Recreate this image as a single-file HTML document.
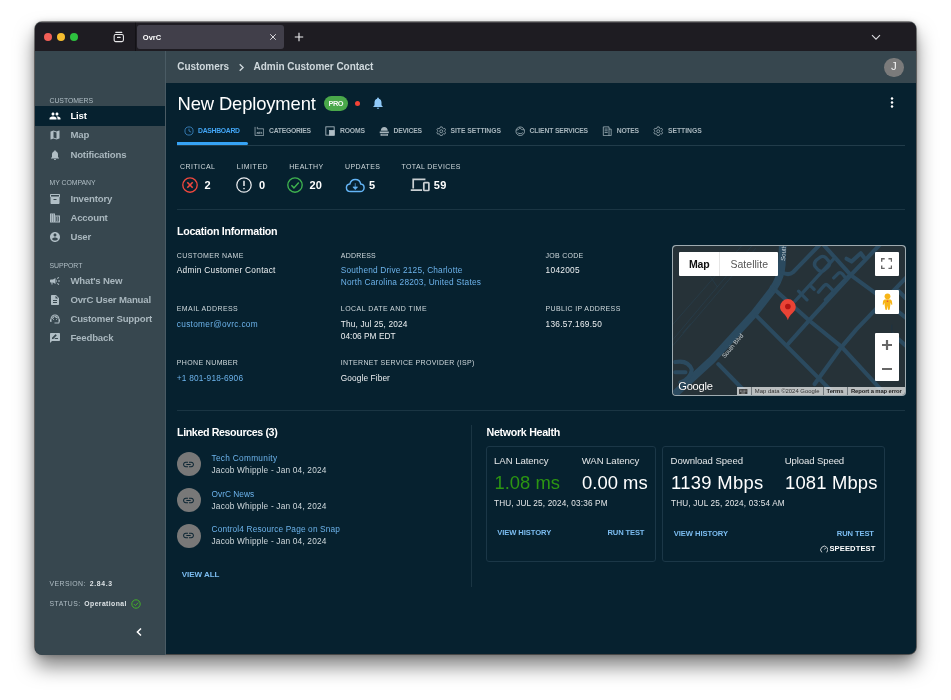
<!DOCTYPE html>
<html lang="en">
<head>
<meta charset="utf-8">
<title>OvrC</title>
<style>
*{box-sizing:border-box;margin:0;padding:0}
html,body{width:951px;height:700px;overflow:hidden;background:#fff}
body{font-family:"Liberation Sans",Arial,sans-serif;position:relative;color:#fff}
#win{position:absolute;left:35px;top:21.5px;width:881.3px;height:632.6px;border-radius:7px;background:#06212f;
 box-shadow:0 0 0 .8px rgba(0,0,0,.55),0 12px 20px rgba(0,0,0,.5),0 1px 6px rgba(0,0,0,.25);}
#clip{will-change:transform;position:absolute;left:0;top:0;width:881.3px;height:632.6px;border-radius:7px;overflow:hidden}
.abs{position:absolute}
/* t: text positioned by its vertical centre */
.t{position:absolute;white-space:nowrap;line-height:1;transform:translateY(-50%)}
#titlebar{left:0;top:0;width:882px;height:28.7px;background:#1e1c22}
#tab{left:102px;top:2.8px;width:147px;height:24.3px;background:#413f4a;border-radius:3px}
.tl{position:absolute;width:8.3px;height:8.3px;border-radius:50%;top:10.7px}
#sidebar{left:0;top:28.7px;width:130px;height:604px;background:#37474f}
#appbar{left:130px;top:28.7px;width:752px;height:32.8px;background:#37474f}
#sel{left:0;top:84.4px;width:130px;height:19.2px;background:#06212f}
.sh{font-size:6.9px;color:#b0bec5;letter-spacing:-.05px;left:14.5px}
.si{font-size:9.6px;font-weight:bold;color:#a9b7be;left:35.4px;letter-spacing:-.16px}
.sic{position:absolute;left:13.7px;width:12px;height:12px;transform:translateY(-50%)}
</style>
</head>
<body>
<div id="win">
<div id="clip">
<!-- TITLE BAR -->
<div id="titlebar" class="abs">
  <div class="tl" style="left:8.6px;background:#f25f57"></div>
  <div class="tl" style="left:21.9px;background:#f6bd2f"></div>
  <div class="tl" style="left:35.1px;background:#2ec13f"></div>
  <svg class="abs" style="left:78.2px;top:9px" width="11.6" height="11.6" viewBox="0 0 12 12" fill="none" stroke="#e8e8ea" stroke-width="1.1"><rect x="1.2" y="3.6" width="9.6" height="7.4" rx="1.6"/><path d="M2.8 1.4h6.4M4.6 6.6h2.8" stroke-linecap="round"/></svg>
  <div class="abs" style="left:100px;top:0;width:1px;height:28.7px;background:#131216"></div>
  <div class="abs" style="left:0;top:0;width:882px;height:.8px;background:rgba(255,255,255,.16)"></div>
  <div id="tab" class="abs"></div>
  <div class="t" style="left:107.8px;top:16px;font-size:7.5px;font-weight:bold;color:#fff">OvrC</div>
  <svg class="abs" style="left:234.4px;top:11.3px" width="8" height="8" viewBox="0 0 8 8" stroke="#d6d6da" stroke-width="1" fill="none"><path d="M1.2 1.2l5.6 5.6M6.8 1.2L1.2 6.8"/></svg>
  <svg class="abs" style="left:258.6px;top:10px" width="10" height="10" viewBox="0 0 10 10" stroke="#f0f0f2" stroke-width="1.1" fill="none"><path d="M5 .8v8.4M.8 5h8.4"/></svg>
  <svg class="abs" style="left:835.8px;top:12px" width="10" height="7" viewBox="0 0 10 7" stroke="#dcdce0" stroke-width="1.1" fill="none"><path d="M1 1.2l4 4 4-4"/></svg>
</div>
<!-- SIDEBAR -->
<div id="sidebar" class="abs"></div>
<div id="appbar" class="abs"></div>
<div id="sel" class="abs"></div>
<div class="abs" style="left:130px;top:28.7px;width:1.2px;height:604px;background:#4a5b64"></div>
<div class="t sh" style="top:78.7px">CUSTOMERS</div>
<div class="t sh" style="top:161px">MY COMPANY</div>
<div class="t sh" style="top:243.5px">SUPPORT</div>
<svg class="sic" style="top:93.9px" viewBox="0 0 24 24" fill="#fff"><path d="M16 11c1.66 0 2.99-1.34 2.99-3S17.66 5 16 5c-1.66 0-3 1.34-3 3s1.34 3 3 3zm-8 0c1.66 0 2.99-1.34 2.99-3S9.66 5 8 5C6.34 5 5 6.34 5 8s1.34 3 3 3zm0 2c-2.33 0-7 1.17-7 3.500V19h14v-2.500c0-2.330-4.670-3.500-7-3.500zm8 0c-.29 0-.62.02-.97.05 1.160.84 1.970 1.970 1.970 3.450V19h6v-2.500c0-2.330-4.670-3.500-7-3.500z"/></svg>
<div class="t si" style="top:93.9px;color:#fff">List</div>
<svg class="sic" style="top:113.3px" viewBox="0 0 24 24" fill="#b0bec5"><path d="M20.5 3l-.16.03L15 5.1 9 3 3.36 4.9c-.21.07-.36.25-.36.48V20.5c0 .28.22.5.5.5l.16-.03L9 18.9l6 2.1 5.64-1.9c.21-.07.36-.25.36-.48V3.5c0-.28-.22-.5-.5-.5zM15 19l-6-2.11V5l6 2.11V19z"/></svg>
<div class="t si" style="top:113.3px">Map</div>
<svg class="sic" style="top:133px" viewBox="0 0 24 24" fill="#b0bec5"><path d="M12 22c1.1 0 2-.9 2-2h-4c0 1.1.89 2 2 2zm6-6v-5c0-3.07-1.64-5.64-4.5-6.32V4c0-.83-.67-1.5-1.5-1.5s-1.5.67-1.5 1.5v.68C7.63 5.36 6 7.92 6 11v5l-2 2v1h16v-1l-2-2z"/></svg>
<div class="t si" style="top:133px">Notifications</div>
<svg class="sic" style="top:177.2px" viewBox="0 0 24 24" fill="#b0bec5"><path d="M20 2H4c-1 0-2 .9-2 2v3.01c0 .72.43 1.34 1 1.69V20c0 1.1 1.1 2 2 2h14c.9 0 2-.9 2-2V8.7c.57-.35 1-.97 1-1.69V4c0-1.1-1-2-2-2zm-5 12H9v-2h6v2zm5-7H4V4h16v3z"/></svg>
<div class="t si" style="top:177.2px">Inventory</div>
<svg class="sic" style="top:196.1px" viewBox="0 0 24 24" fill="#b0bec5"><path d="M2 3h10v4h10v14H2z"/><path fill="#37474f" opacity=".72" d="M4 5h2v2H4zM8 5h2v2H8zM4 9h2v2H4zM8 9h2v2H8zM4 13h2v2H4zM8 13h2v2H8zM4 17h2v2H4zM8 17h2v2H8zM12 9h8v10h-8z"/><path d="M12 11h2v2h-2zM12 15h2v2h-2zM16 11h2v2h-2zM16 15h2v2h-2z"/></svg>
<div class="t si" style="top:196.1px">Account</div>
<svg class="sic" style="top:214.6px" viewBox="0 0 24 24" fill="#b0bec5"><path d="M12 2C6.48 2 2 6.48 2 12s4.48 10 10 10 10-4.48 10-10S17.52 2 12 2zm0 3c1.66 0 3 1.34 3 3s-1.34 3-3 3-3-1.34-3-3 1.34-3 3-3zm0 14.2c-2.5 0-4.71-1.28-6-3.22.03-1.99 4-3.08 6-3.08 1.99 0 5.97 1.09 6 3.08-1.29 1.94-3.5 3.22-6 3.22z"/></svg>
<div class="t si" style="top:214.6px">User</div>
<svg class="sic" style="top:258.6px" viewBox="0 0 24 24" fill="#b0bec5"><path d="M18 11v2h4v-2h-4zm-2 6.61c.96.71 2.21 1.65 3.2 2.39.4-.53.8-1.07 1.2-1.6-.99-.74-2.24-1.68-3.2-2.4-.4.54-.8 1.08-1.2 1.61zM20.4 5.6c-.4-.53-.8-1.07-1.2-1.6-.99.74-2.24 1.68-3.2 2.4.4.53.8 1.07 1.2 1.6.96-.72 2.21-1.65 3.2-2.4zM4 9c-1.1 0-2 .9-2 2v2c0 1.1.9 2 2 2h1v4h2v-4h1l5 3V6L8 9H4zm11.5 3c0-1.33-.58-2.53-1.5-3.35v6.69c.92-.81 1.5-2.01 1.5-3.34z"/></svg>
<div class="t si" style="top:258.6px">What's New</div>
<svg class="sic" style="top:278.1px" viewBox="0 0 24 24" fill="#b0bec5"><path d="M14 2H6c-1.1 0-1.99.9-1.99 2L4 20c0 1.1.89 2 1.99 2H18c1.1 0 2-.9 2-2V8l-6-6zm2 16H8v-2h8v2zm0-4H8v-2h8v2zm-3-5V3.5L18.5 9H13z"/></svg>
<div class="t si" style="top:278.1px">OvrC User Manual</div>
<svg class="sic" style="top:297.3px" viewBox="0 0 24 24" fill="#b0bec5"><path d="M21 12.22C21 6.73 16.74 3 12 3c-4.69 0-9 3.65-9 9.28-.6.34-1 .98-1 1.72v2c0 1.1.9 2 2 2h1v-6.1c0-3.87 3.13-7 7-7s7 3.13 7 7V19h-8v2h8c1.1 0 2-.9 2-2v-1.22c.59-.31 1-.92 1-1.64v-2.3c0-.7-.41-1.31-1-1.62zM9 14a1 1 0 1 0 0-2 1 1 0 0 0 0 2zM15 14a1 1 0 1 0 0-2 1 1 0 0 0 0 2zM18 11.03C17.52 8.18 15.04 6 12.05 6c-3.03 0-6.29 2.51-6.03 6.45 2.47-1.01 4.33-3.21 4.86-5.89 1.31 2.63 4 4.44 7.12 4.47z"/></svg>
<div class="t si" style="top:297.3px">Customer Support</div>
<svg class="sic" style="top:315.9px" viewBox="0 0 24 24" fill="#b0bec5"><path d="M20 2H4c-1.1 0-1.99.9-1.99 2L2 22l4-4h14c1.1 0 2-.9 2-2V4c0-1.1-.9-2-2-2zM6 14v-2.47l6.880-6.880c.2-.2.51-.2.71 0l1.770 1.770c.2.2.2.51 0 .71L8.470 14H6zm12 0h-7.500l2-2H18v2z"/></svg>
<div class="t si" style="top:315.9px">Feedback</div>
<div class="t" style="left:14.5px;top:562.4px;font-size:6.9px;color:#b0bec5;letter-spacing:.42px">VERSION: <span style="color:#dde3e6;font-weight:bold;font-size:6.8px;letter-spacing:.7px;margin-left:1.6px">2.84.3</span></div>
<div class="t" style="left:14.5px;top:581.9px;font-size:6.9px;color:#b0bec5;letter-spacing:.42px">STATUS: <span style="color:#dde3e6;font-weight:bold;font-size:6.8px;letter-spacing:.42px;margin-left:1.5px">Operational</span></div>
<svg class="abs" style="left:96.4px;top:576.7px" width="10" height="10" viewBox="0 0 10 10" fill="none" stroke="#43b02a" stroke-width="1"><circle cx="5" cy="5" r="4.2"/><path d="M2.9 5.1l1.5 1.5 2.8-3"/></svg>
<svg class="abs" style="left:100.4px;top:604.9px" width="8" height="10" viewBox="0 0 8 10" fill="none" stroke="#fff" stroke-width="1.5"><path d="M6 1.5L2.4 5 6 8.5"/></svg>
<!--SIDEBAR-ITEMS-END-->
<!--APPBAR-->
<!--MAIN-START-->
<svg class="abs" style="left:201.5px;top:40.6px" width="9" height="9" viewBox="0 0 8 8" fill="none" stroke="#cfd8dc" stroke-width="1.2"><path d="M2.4 1.2L5.4 4 2.4 6.8"/></svg>
<div class="abs" style="left:849.4px;top:35.6px;width:19.4px;height:19.4px;border-radius:50%;background:#7b7b7b"></div>
<div class="t" style="left:856px;top:45.4px;font-size:11.5px;color:#f5f5f5">J</div>
<div class="abs" style="left:288.8px;top:74px;width:24.2px;height:14.8px;border-radius:7.4px;background:#4aa84a"></div>
<div class="abs" style="left:320px;top:78.8px;width:5.2px;height:5.2px;border-radius:50%;background:#f44336"></div>
<svg class="abs" style="left:335.8px;top:74.3px" width="14" height="14" viewBox="0 0 24 24" fill="#90caf9"><path d="M12 22c1.1 0 2-.9 2-2h-4c0 1.1.89 2 2 2zm6-6v-5c0-3.07-1.64-5.64-4.5-6.32V4c0-.83-.67-1.5-1.500-1.500s-1.500.67-1.500 1.500v.68C7.630 5.360 6 7.920 6 11v5l-2 2v1h16v-1l-2-2z"/></svg>
<svg class="abs" style="left:855.3px;top:75.1px" width="4" height="11" viewBox="0 0 4 11" fill="#fff"><circle cx="2" cy="1.6" r="1.25"/><circle cx="2" cy="5.5" r="1.25"/><circle cx="2" cy="9.4" r="1.25"/></svg>
<div class="abs" style="left:142px;top:123.4px;width:728px;height:1px;background:#213c4a"></div>
<div class="abs" style="left:142px;top:120.3px;width:70.8px;height:3.2px;border-radius:0 1.5px 1.5px 0;background:#36a3f5"></div>
<svg class="abs" style="left:148.6px;top:103.9px" width="10" height="10" viewBox="0 0 12 12" fill="none" stroke="#4593d6" stroke-width="0.9"><circle cx="6" cy="6" r="4.9"/><path d="M6 3.2V6l2.6 1.400"/></svg>
<svg class="abs" style="left:218.8px;top:103.7px" width="10.5" height="10.5" viewBox="0 0 12 12" fill="none" stroke="#b0bec5" stroke-width="0.8"><path d="M1.2 1v10h9.8V3.2H3.8V1M3.6 9V7.4h1.2V9M5.8 9V6.6M6.8 9V6.6M8.8 9V7.2H7.8"/></svg>
<svg class="abs" style="left:290.0px;top:103.9px" width="10" height="10" viewBox="0 0 12 12" fill="none" stroke="#b0bec5" stroke-width="1"><rect x="1" y="1" width="10" height="10"/><rect x="5.4" y="5.4" width="5.6" height="5.6" fill="#b0bec5"/></svg>
<svg class="abs" style="left:343.8px;top:103.7px" width="10.5" height="10.5" viewBox="0 0 12 12" fill="none" stroke="#b0bec5" stroke-width="0.7"><g stroke="none" fill="#a7b5bc"><path d="M2 5.400C2 3 3.800 1.200 6 1.200s4 1.800 4 4.200z"/><path d="M.8 6.300h10.400v1.900H.8z"/><path d="M1.800 9h8.400v2.200H1.800z"/></g><path d="M3 10.100h6" stroke="#06212f" stroke-width=".5"/></svg>
<svg class="abs" style="left:400.8px;top:103.7px" width="10.5" height="10.5" viewBox="0 0 12 12" fill="none" stroke="#b0bec5" stroke-width="0.8"><circle cx="6" cy="6" r="1.7"/><path d="M5 1h2l.4 1.400 1.200.700 1.400-.400 1 1.700-1 1.100v1l1 1.100-1 1.700-1.400-.400-1.200.700L7 11H5l-.4-1.400-1.200-.700-1.400.400-1-1.700 1-1.100v-1l-1-1.100 1-1.700 1.400.400 1.200-.700z"/></svg>
<svg class="abs" style="left:479.8px;top:103.7px" width="10.5" height="10.5" viewBox="0 0 12 12" fill="none" stroke="#b0bec5" stroke-width="0.85"><circle cx="6" cy="6" r="4.900"/><path d="M1.500 4.500c2 0 3.500-.8 4-2.600.8 1.700 2.600 2.600 5 2.400M3 7.500c1 1.600 5 1.600 6 0"/></svg>
<svg class="abs" style="left:566.5px;top:103.7px" width="10.5" height="10.5" viewBox="0 0 12 12" fill="none" stroke="#b0bec5" stroke-width="0.85"><path d="M1.500 1h6.500v10H1.500zM8 3.500h2.500V11H8M3 3.500h3.500M3 5.500h3.500M3 7.500h3.500"/></svg>
<svg class="abs" style="left:617.8px;top:103.7px" width="10.5" height="10.5" viewBox="0 0 12 12" fill="none" stroke="#b0bec5" stroke-width="0.8"><circle cx="6" cy="6" r="1.7"/><path d="M5 1h2l.4 1.400 1.200.700 1.400-.400 1 1.700-1 1.100v1l1 1.100-1 1.700-1.400-.400-1.200.700L7 11H5l-.4-1.400-1.200-.700-1.400.400-1-1.700 1-1.100v-1l-1-1.100 1-1.700 1.400.400 1.200-.700z"/></svg>
<svg class="abs" style="left:146.2px;top:154.0px" width="18" height="18" viewBox="0 0 20 20" fill="none" stroke="#f0483e" stroke-width="1.5"><circle cx="10" cy="10" r="8"/><path d="M7 7l6 6M13 7l-6 6" stroke-width="1.8"/></svg>
<svg class="abs" style="left:200.3px;top:154.0px" width="18" height="18" viewBox="0 0 20 20" fill="none" stroke="#e8eaed" stroke-width="1.4"><circle cx="10" cy="10" r="8"/><path d="M10 5.200v6" stroke-width="1.700"/><circle cx="10" cy="14" r=".9" fill="#e8eaed" stroke="none"/></svg>
<svg class="abs" style="left:251.3px;top:154.0px" width="18" height="18" viewBox="0 0 20 20" fill="none" stroke="#3fb34f" stroke-width="1.5"><circle cx="10" cy="10" r="8"/><path d="M6 10.400l2.800 2.800 5.400-6" stroke-width="1.600"/></svg>
<svg class="abs" style="left:310px;top:153.6px" width="20.500" height="18.500" viewBox="0 0 24 22" fill="none" stroke="#64b5f6" stroke-width="1.700"><path d="M6.500 18.500C3.500 18.500 1.500 16.500 1.500 14c0-2.400 1.800-4.300 4.100-4.500C6.400 6.400 9 4.200 12 4.200c3.300 0 6 2.300 6.500 5.400 2.300.2 4 2 4 4.400 0 2.500-2 4.500-4.500 4.500z"/><path d="M12 8.500v4.500h2.800L12 16.200 9.200 13H12" fill="#64b5f6" stroke-width=".8"/></svg>
<svg class="abs" style="left:374.5px;top:156.2px" width="20" height="13.600" viewBox="0 0 22 15" fill="none" stroke="#c9cfd2" stroke-width="1.900"><path d="M3.500 11.500V1.500h13.500M.8 13.500h12.500"/><rect x="15.200" y="5" width="5.600" height="8.800" rx=".8"/></svg>
<div class="abs" style="left:142px;top:186.9px;width:728px;height:1px;background:#1a3543"></div>
<div class="abs" style="left:142px;top:388.3px;width:728px;height:1px;background:#1a3543"></div>
<div class="abs" style="left:436px;top:402.8px;width:1px;height:162px;background:#1a3543"></div>
<div class="abs" style="left:141.7px;top:430.2px;width:24.2px;height:24.2px;border-radius:50%;background:#787878"><svg class="abs" style="left:5.6px;top:5.6px" width="13" height="13" viewBox="0 0 24 24" fill="#0b2533"><path d="M3.900 12c0-1.710 1.390-3.100 3.100-3.100h4V7H7c-2.760 0-5 2.240-5 5s2.240 5 5 5h4v-1.900H7c-1.710 0-3.100-1.390-3.100-3.100zM8 13h8v-2H8v2zm9-6h-4v1.900h4c1.710 0 3.100 1.390 3.100 3.100s-1.390 3.100-3.100 3.100h-4V17h4c2.760 0 5-2.240 5-5s-2.240-5-5-5z"/></svg></div>
<div class="abs" style="left:141.7px;top:466.2px;width:24.2px;height:24.2px;border-radius:50%;background:#787878"><svg class="abs" style="left:5.6px;top:5.6px" width="13" height="13" viewBox="0 0 24 24" fill="#0b2533"><path d="M3.900 12c0-1.710 1.390-3.100 3.100-3.100h4V7H7c-2.760 0-5 2.240-5 5s2.240 5 5 5h4v-1.900H7c-1.710 0-3.100-1.390-3.100-3.100zM8 13h8v-2H8v2zm9-6h-4v1.900h4c1.710 0 3.100 1.390 3.100 3.100s-1.390 3.100-3.100 3.100h-4V17h4c2.760 0 5-2.240 5-5s-2.240-5-5-5z"/></svg></div>
<div class="abs" style="left:141.7px;top:501.5px;width:24.2px;height:24.2px;border-radius:50%;background:#787878"><svg class="abs" style="left:5.6px;top:5.6px" width="13" height="13" viewBox="0 0 24 24" fill="#0b2533"><path d="M3.900 12c0-1.710 1.390-3.100 3.100-3.100h4V7H7c-2.760 0-5 2.240-5 5s2.240 5 5 5h4v-1.900H7c-1.710 0-3.100-1.390-3.100-3.100zM8 13h8v-2H8v2zm9-6h-4v1.900h4c1.710 0 3.100 1.390 3.100 3.100s-1.390 3.100-3.100 3.100h-4V17h4c2.760 0 5-2.240 5-5s-2.240-5-5-5z"/></svg></div>
<div class="abs" style="left:450.7px;top:423.6px;width:170.1px;height:116.9px;border:1px solid #1b3747;border-radius:3px"></div>
<div class="abs" style="left:627.2px;top:423.6px;width:222.9px;height:116.9px;border:1px solid #1b3747;border-radius:3px"></div>
<svg class="abs" style="left:784.5px;top:522.7px" width="8.500" height="8.500" viewBox="0 0 12 12" fill="none" stroke="#fff" stroke-width="1.100"><path d="M2.600 10.400A5 5 0 1 1 9.400 10.400"/><path d="M6 6.400l2-2.200"/></svg>
<div class="abs" style="left:637.4px;top:222.9px;width:233.2px;height:151.2px;border-radius:4px;background:#9fabb0"></div>
<div id="map" class="abs" style="left:638.1px;top:223.6px;width:231.8px;height:149.8px;border-radius:3.5px;overflow:hidden;background:#263238">
<svg class="abs" style="left:0;top:0" width="231.8" height="149.8" viewBox="21 25 910 587" preserveAspectRatio="none" fill="none" stroke="#2b4a5f" stroke-linecap="round" stroke-linejoin="round">
<g stroke-width="2.5" opacity=".6"><path d="M18 395L330 25M18 418L345 35M18 335L290 25M140 105L195 185M90 330L60 365"/></g>
<g stroke-width="30"><path d="M-10 640L175 470L340 290L410 200Q445 150 448 100L452 20"/></g>
<g stroke-width="16">
<path d="M350 300L620 570L660 612"/>
<path d="M409 186L558 319L683 420L860 612"/>
<path d="M199 488L320 612"/>
<path d="M613 22L719 139L813 208L940 310"/>
<path d="M470 412L567 304L719 139L835 18"/>
<path d="M577 566L683 420L741 352L935 150"/>
<path d="M595 22L492 128Q475 142 448 128"/>
<path d="M702 75L722 86L758 53L771 70"/>
<path d="M500 241L652 75" stroke-width="13"/>
<path d="M514 202L547 236M560 180L575 195" stroke-width="13"/>
<path d="M578 104Q572 92 584 80L600 68Q612 62 622 72L634 86Q640 98 628 108L612 122Q600 128 590 118z" stroke-width="13"/>
<path d="M619 236L708 144" stroke-width="13"/>
<path d="M592 206L614 180Q622 172 630 180L650 200M652 150L670 132Q678 126 686 134L700 152" stroke-width="13"/>
<path d="M30 480Q80 470 95 510Q90 545 50 560M30 520L70 520"/>
<path d="M880 335L880 362" stroke-width="3" stroke="#1d3345"/>
<path d="M940 420L885 372M940 235L905 200"/>
</g>
<g fill="#2b4a5f" stroke="none" font-family="Liberation Sans, sans-serif" font-size="24"><text transform="translate(224 466) rotate(-50)" fill="#cdd5d9">South Blvd</text><text transform="translate(461 84) rotate(-86)" fill="#cdd5d9">South</text></g>
<g stroke="none"><path d="M472 316C466 290 441 285 441 264a31 31 0 0 1 62 0c0 21-25 26-31 52z" fill="#ea4335"/><circle cx="472" cy="262" r="11" fill="#b31412"/></g>
</svg>
<!-- controls -->
<div class="abs" style="left:6.2px;top:6.2px;width:98.8px;height:24px;background:#fff;border-radius:1px"></div>
<div class="abs" style="left:45.8px;top:6px;width:1px;height:24px;background:#e6e6e6"></div>
<div class="t" style="left:15.8px;top:18.3px;font-size:10.5px;font-weight:bold;color:#111;letter-spacing:-.15px">Map</div>
<div class="t" style="left:57.4px;top:18.3px;font-size:10.5px;color:#565656;letter-spacing:.02px">Satellite</div>
<div class="abs" style="left:201.8px;top:6.2px;width:24px;height:24px;background:#fff;border-radius:1px"></div>
<svg class="abs" style="left:208.1px;top:12.6px" width="11.200" height="11.200" viewBox="0 0 12 12" fill="none" stroke="#666" stroke-width="1.5"><path d="M.75 4V.75H4M8 .75h3.250V4M11.250 8v3.250H8M4 11.250H.75V8"/></svg>
<div class="abs" style="left:202px;top:44px;width:24px;height:24px;background:#fff;border-radius:1px"></div>
<svg class="abs" style="left:208.5px;top:47.2px" width="11" height="18" viewBox="0 0 11 18" fill="#f7b518"><circle cx="5.500" cy="3.300" r="2.900"/><path d="M2.600 6.600Q5.500 5.800 8.400 6.600Q9.800 7.200 10 8.800L10.300 11.400Q9.800 12.200 9.200 11.500L8.600 9.400 8.300 12.300 7.700 16.600Q6.800 17.300 6 16.600L5.500 12.800 5 16.600Q4.200 17.300 3.300 16.600L2.700 12.300 2.400 9.400 1.800 11.500Q1.200 12.200.7 11.400L1 8.800Q1.200 7.200 2.600 6.600z"/><circle cx="5.500" cy="8.300" r=".8" fill="#e8453c"/></svg>
<div class="abs" style="left:202px;top:87.4px;width:24px;height:48px;background:#fff;border-radius:1px"></div>
<svg class="abs" style="left:202px;top:87.4px" width="24" height="48" viewBox="0 0 24 48" fill="none" stroke="#666" stroke-width="2.200"><path d="M12 7v10M7 12h10M7 36h10"/></svg>
<!-- Google logo -->
<div class="t" style="left:5.2px;top:141.6px;font-size:11.2px;color:#fff;letter-spacing:-.3px;text-shadow:0 0 1px rgba(0,0,0,.6)">Google</div>
<!-- bottom bar -->
<div class="abs" style="left:63.6px;top:141.8px;width:169px;height:8.2px;background:rgba(245,245,245,.72)"></div>
<svg class="abs" style="left:66.3px;top:143.3px" width="8.500" height="5.400" viewBox="0 0 17 11"><rect x="0" y="0" width="17" height="11" rx="1.200" fill="#3c3c3c"/><path d="M2 2.500h13M2 5.200h13" stroke="#cfd2d3" stroke-width="1.300" stroke-dasharray="1.600 1.200"/><path d="M4.500 8.200h8" stroke="#cfd2d3" stroke-width="1.300"/></svg>
<div class="abs" style="left:78.4px;top:141.8px;width:.6px;height:8.2px;background:#263238;opacity:.5"></div>
<div class="abs" style="left:149.6px;top:141.8px;width:.6px;height:8.2px;background:#263238;opacity:.5"></div>
<div class="abs" style="left:173.6px;top:141.8px;width:.6px;height:8.2px;background:#263238;opacity:.5"></div>
<div class="t" style="left:81.7px;top:146.1px;font-size:5.9px;color:#333;letter-spacing:.02px">Map data ©2024 Google</div>
<div class="t" style="left:153.5px;top:146.1px;font-size:5.9px;color:#222;font-weight:bold;letter-spacing:-.1px">Terms</div>
<div class="t" style="left:177.8px;top:146.1px;font-size:5.9px;color:#222;font-weight:bold;letter-spacing:-.12px">Report a map error</div>
</div>
<div class="t" style="left:142.2px;top:45px;font-size:10px;color:#cfd8dc;font-weight:bold;letter-spacing:-0.03px">Customers</div>
<div class="t" style="left:218.5px;top:45px;font-size:10px;color:#cfd8dc;font-weight:bold;letter-spacing:-0.03px">Admin Customer Contact</div>
<div class="t" style="left:142.5px;top:82px;font-size:18.4px;color:#fff;letter-spacing:-0.13px">New Deployment</div>
<div class="t" style="left:293.6px;top:81.5px;font-size:7.4px;color:#f4f8f4;font-weight:bold;letter-spacing:-0.56px">PRO</div>
<div class="t" style="left:163px;top:109.2px;font-size:6.8px;color:#42a5f5;font-weight:bold;letter-spacing:-0.27px">DASHBOARD</div>
<div class="t" style="left:234px;top:109.2px;font-size:6.8px;color:#a7b5bc;font-weight:bold;letter-spacing:-0.27px">CATEGORIES</div>
<div class="t" style="left:305px;top:109.2px;font-size:6.8px;color:#a7b5bc;font-weight:bold;letter-spacing:-0.17px">ROOMS</div>
<div class="t" style="left:358.6px;top:109.2px;font-size:6.8px;color:#a7b5bc;font-weight:bold;letter-spacing:-0.24px">DEVICES</div>
<div class="t" style="left:415.5px;top:109.2px;font-size:6.8px;color:#a7b5bc;font-weight:bold;letter-spacing:-0.04px">SITE SETTINGS</div>
<div class="t" style="left:494.6px;top:109.2px;font-size:6.8px;color:#a7b5bc;font-weight:bold;letter-spacing:-0.16px">CLIENT SERVICES</div>
<div class="t" style="left:581.8px;top:109.2px;font-size:6.8px;color:#a7b5bc;font-weight:bold;letter-spacing:-0.31px">NOTES</div>
<div class="t" style="left:633px;top:109.2px;font-size:6.8px;color:#a7b5bc;font-weight:bold;letter-spacing:-0.04px">SETTINGS</div>
<div class="t" style="left:145px;top:144.0px;font-size:7px;color:#cfd8dc;letter-spacing:0.44px">CRITICAL</div>
<div class="t" style="left:201.7px;top:144.0px;font-size:7px;color:#cfd8dc;letter-spacing:0.56px">LIMITED</div>
<div class="t" style="left:254.2px;top:144.0px;font-size:7px;color:#cfd8dc;letter-spacing:0.37px">HEALTHY</div>
<div class="t" style="left:310px;top:144.0px;font-size:7px;color:#cfd8dc;letter-spacing:0.41px">UPDATES</div>
<div class="t" style="left:366.4px;top:144.0px;font-size:7px;color:#cfd8dc;letter-spacing:0.39px">TOTAL DEVICES</div>
<div class="t" style="left:169.5px;top:163.0px;font-size:11px;color:#fff;font-weight:bold;letter-spacing:-0.33px">2</div>
<div class="t" style="left:224px;top:163.0px;font-size:11px;color:#fff;font-weight:bold;letter-spacing:-0.12px">0</div>
<div class="t" style="left:274.5px;top:163.0px;font-size:11px;color:#fff;font-weight:bold;letter-spacing:0.15px">20</div>
<div class="t" style="left:334px;top:163.0px;font-size:11px;color:#fff;font-weight:bold;letter-spacing:-0.12px">5</div>
<div class="t" style="left:398.7px;top:163.0px;font-size:11px;color:#fff;font-weight:bold;letter-spacing:0.35px">59</div>
<div class="t" style="left:142px;top:208.7px;font-size:10.7px;color:#fff;font-weight:bold;letter-spacing:-0.3px">Location Information</div>
<div class="t" style="left:141.8px;top:232.7px;font-size:7px;color:#cfd8dc;letter-spacing:0.38px">CUSTOMER NAME</div>
<div class="t" style="left:141.8px;top:248.4px;font-size:8.3px;color:#eceff1;letter-spacing:0.28px">Admin Customer Contact</div>
<div class="t" style="left:305.8px;top:232.7px;font-size:7px;color:#cfd8dc;letter-spacing:0.19px">ADDRESS</div>
<div class="t" style="left:305.8px;top:248.4px;font-size:8.3px;color:#6cb2ea;letter-spacing:0.18px">Southend Drive 2125, Charlotte</div>
<div class="t" style="left:305.8px;top:259.6px;font-size:8.3px;color:#6cb2ea;letter-spacing:0.2px">North Carolina 28203, United States</div>
<div class="t" style="left:510.6px;top:232.7px;font-size:7px;color:#cfd8dc;letter-spacing:0.27px">JOB CODE</div>
<div class="t" style="left:510.6px;top:248.4px;font-size:8.3px;color:#eceff1;letter-spacing:0.28px">1042005</div>
<div class="t" style="left:141.8px;top:286.1px;font-size:7px;color:#cfd8dc;letter-spacing:0.4px">EMAIL ADDRESS</div>
<div class="t" style="left:141.8px;top:301.8px;font-size:8.3px;color:#6cb2ea;letter-spacing:0.29px">customer@ovrc.com</div>
<div class="t" style="left:305.8px;top:286.1px;font-size:7px;color:#cfd8dc;letter-spacing:0.45px">LOCAL DATE AND TIME</div>
<div class="t" style="left:305.8px;top:301.8px;font-size:8.3px;color:#eceff1;letter-spacing:0.15px">Thu, Jul 25, 2024</div>
<div class="t" style="left:305.8px;top:313.8px;font-size:8.3px;color:#eceff1;letter-spacing:0.03px">04:06 PM EDT</div>
<div class="t" style="left:510.6px;top:286.1px;font-size:7px;color:#cfd8dc;letter-spacing:0.35px">PUBLIC IP ADDRESS</div>
<div class="t" style="left:510.6px;top:301.8px;font-size:8.3px;color:#eceff1;letter-spacing:0.26px">136.57.169.50</div>
<div class="t" style="left:141.8px;top:339.8px;font-size:7px;color:#cfd8dc;letter-spacing:0.36px">PHONE NUMBER</div>
<div class="t" style="left:141.8px;top:355.8px;font-size:8.3px;color:#6cb2ea;letter-spacing:0.2px">+1 801-918-6906</div>
<div class="t" style="left:305.8px;top:339.8px;font-size:7px;color:#cfd8dc;letter-spacing:0.32px">INTERNET SERVICE PROVIDER (ISP)</div>
<div class="t" style="left:305.8px;top:355.8px;font-size:8.3px;color:#eceff1;letter-spacing:0.1px">Google Fiber</div>
<div class="t" style="left:142px;top:410.1px;font-size:10.7px;color:#fff;font-weight:bold;letter-spacing:-0.39px">Linked Resources (3)</div>
<div class="t" style="left:176.5px;top:435.7px;font-size:8.3px;color:#6cb2ea;letter-spacing:0.29px">Tech Community</div>
<div class="t" style="left:176.5px;top:447.5px;font-size:8.3px;color:#cfd8dc;letter-spacing:0.19px">Jacob Whipple - Jan 04, 2024</div>
<div class="t" style="left:176.5px;top:471.7px;font-size:8.3px;color:#6cb2ea;letter-spacing:0.03px">OvrC News</div>
<div class="t" style="left:176.5px;top:483.5px;font-size:8.3px;color:#cfd8dc;letter-spacing:0.19px">Jacob Whipple - Jan 04, 2024</div>
<div class="t" style="left:176.5px;top:506.7px;font-size:8.3px;color:#6cb2ea;letter-spacing:0.15px">Control4 Resource Page on Snap</div>
<div class="t" style="left:176.5px;top:518.5px;font-size:8.3px;color:#cfd8dc;letter-spacing:0.19px">Jacob Whipple - Jan 04, 2024</div>
<div class="t" style="left:146.8px;top:553.2px;font-size:8px;color:#7bbcf0;font-weight:bold;letter-spacing:-0.03px">VIEW ALL</div>
<div class="t" style="left:451.5px;top:410.2px;font-size:10.7px;color:#fff;font-weight:bold;letter-spacing:-0.31px">Network Health</div>
<div class="t" style="left:459px;top:438.6px;font-size:9.6px;color:#e4e7e9;letter-spacing:-0.05px">LAN Latency</div>
<div class="t" style="left:546.7px;top:438.6px;font-size:9.6px;color:#e4e7e9;letter-spacing:-0.07px">WAN Latency</div>
<div class="t" style="left:459.5px;top:461.2px;font-size:18.4px;color:#2c9612">1.08 ms</div>
<div class="t" style="left:547px;top:461.2px;font-size:18.4px;color:#fff;letter-spacing:0.03px">0.00 ms</div>
<div class="t" style="left:459px;top:481.5px;font-size:8.2px;color:#e4e7e9;letter-spacing:0.16px">THU, JUL 25, 2024, 03:36 PM</div>
<div class="t" style="left:462.2px;top:510.9px;font-size:7.6px;color:#7bbcf0;font-weight:bold;letter-spacing:-0.07px">VIEW HISTORY</div>
<div class="t" style="left:572.5px;top:510.9px;font-size:7.6px;color:#7bbcf0;font-weight:bold;letter-spacing:-0.14px">RUN TEST</div>
<div class="t" style="left:635.6px;top:438.6px;font-size:9.6px;color:#e4e7e9;letter-spacing:-0.05px">Download Speed</div>
<div class="t" style="left:749.8px;top:438.6px;font-size:9.6px;color:#e4e7e9;letter-spacing:-0.13px">Upload Speed</div>
<div class="t" style="left:636px;top:461.2px;font-size:18.4px;color:#fff;letter-spacing:0.32px">1139 Mbps</div>
<div class="t" style="left:750px;top:461.2px;font-size:18.4px;color:#fff;letter-spacing:0.18px">1081 Mbps</div>
<div class="t" style="left:636px;top:481.7px;font-size:8.2px;color:#e4e7e9;letter-spacing:0.18px">THU, JUL 25, 2024, 03:54 AM</div>
<div class="t" style="left:638.75px;top:511.9px;font-size:7.6px;color:#7bbcf0;font-weight:bold;letter-spacing:-0.06px">VIEW HISTORY</div>
<div class="t" style="left:801.8px;top:511.9px;font-size:7.6px;color:#7bbcf0;font-weight:bold;letter-spacing:-0.11px">RUN TEST</div>
<div class="t" style="left:794.4px;top:526.9px;font-size:7.6px;color:#fff;font-weight:bold;letter-spacing:0.11px">SPEEDTEST</div>
<!--MAIN-END-->
</div>
</div>
</body>
</html>
